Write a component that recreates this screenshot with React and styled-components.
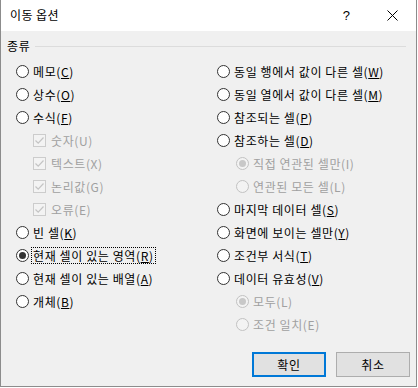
import React from 'react';
import styled, { createGlobalStyle } from 'styled-components';

const GlobalStyle = createGlobalStyle`
  html, body { margin: 0; padding: 0; background: #ffffff; }
  body {
    font-family: "Noto Sans CJK KR", "Noto Sans", sans-serif;
    font-size: 12px;
    color: #000;
  }
`;

const leftItems = [
    { label: "메모", key: "C" },
    { label: "상수", key: "O" },
    { label: "수식", key: "F" },
    { kind: "check", label: "숫자", key: "U", disabled: true, checked: true },
    { kind: "check", label: "텍스트", key: "X", disabled: true, checked: true },
    { kind: "check", label: "논리값", key: "G", disabled: true, checked: true },
    { kind: "check", label: "오류", key: "E", disabled: true, checked: true },
    { label: "빈 셀", key: "K" },
    { label: "현재 셀이 있는 영역", key: "R", checked: true, focus: true },
    { label: "현재 셀이 있는 배열", key: "A" },
    { label: "개체", key: "B" }
];

const rightItems = [
    { label: "동일 행에서 값이 다른 셀", key: "W" },
    { label: "동일 열에서 값이 다른 셀", key: "M" },
    { label: "참조되는 셀", key: "P" },
    { label: "참조하는 셀", key: "D" },
    { label: "직접 연관된 셀만", key: "I", sub: true, disabled: true, checked: true },
    { label: "연관된 모든 셀", key: "L", sub: true, disabled: true },
    { label: "마지막 데이터 셀", key: "S" },
    { label: "화면에 보이는 셀만", key: "Y" },
    { label: "조건부 서식", key: "T" },
    { label: "데이터 유효성", key: "V" },
    { label: "모두", key: "L", sub: true, disabled: true, checked: true },
    { label: "조건 일치", key: "E", sub: true, disabled: true }
];

const RadioMark = ({checked, disabled}) => (
    <RadioCircle disabled={disabled}>
        {checked && <RadioDot disabled={disabled} />}
    </RadioCircle>
);

const CheckMark = ({checked}) => (
    <CheckBox>
        {checked && (
            <svg width="11" height="11" viewBox="0 0 11 11">
                <path d="M1.5 5.5 L4.2 8.2 L9.5 2.5" fill="none" stroke="#c4c4c4" strokeWidth="1.2" />
            </svg>
        )}
    </CheckBox>
);

const Option = ({item, indent}) => (
    <OptionRow indent={indent}>
        {item.kind === "check"
            ? <CheckMark checked={item.checked} />
            : <RadioMark checked={item.checked} disabled={item.disabled} />}
        <OptionLabel disabled={item.disabled} focus={item.focus}>
            {item.label}(<AccessKey disabled={item.disabled}>{item.key}</AccessKey>)
        </OptionLabel>
    </OptionRow>
);

const App = () => (
    <>
        <GlobalStyle />
        <Window>
            <TitleBar>
                <Title>이동 옵션</Title>
                <TitleButtons>
                    <HelpMark>?</HelpMark>
                    <CloseMark>
                        <svg width="11" height="11" viewBox="0 0 11 11">
                            <path d="M0.5 0.5 L10.5 10.5 M10.5 0.5 L0.5 10.5" stroke="#000" strokeWidth="1" />
                        </svg>
                    </CloseMark>
                </TitleButtons>
            </TitleBar>
            <Body>
                <GroupHeader>
                    <GroupLabel>종류</GroupLabel>
                    <GroupLine />
                </GroupHeader>
                <Columns>
                    <Column>
                        {leftItems.map((it, i) => (
                            <Option key={i} item={it} indent={it.kind === "check" ? 17 : 0} />
                        ))}
                    </Column>
                    <Column>
                        {rightItems.map((it, i) => (
                            <Option key={i} item={it} indent={it.sub ? 19 : 0} />
                        ))}
                    </Column>
                </Columns>
                <ButtonBar>
                    <DialogButton primary>확인</DialogButton>
                    <DialogButton>취소</DialogButton>
                </ButtonBar>
            </Body>
        </Window>
    </>
);

export default App;

const Window = styled.div`
  width: 417px;
  height: 387px;
  box-sizing: border-box;
  border: 1px solid #8c8c8c;
  border-top: none;
  display: flex;
  flex-direction: column;
  background: #f0f0f0;
`;

const TitleBar = styled.div`
  height: 31px;
  flex: 0 0 31px;
  background: #ffffff;
  display: flex;
  align-items: center;
  justify-content: space-between;
  padding-left: 9px;
`;

const Title = styled.div`
  font-size: 12px;
  line-height: 16px;
  letter-spacing: 0.4px;
  padding-bottom: 1px;
`;

const TitleButtons = styled.div`
  display: flex;
  align-items: center;
  height: 100%;
`;

const HelpMark = styled.div`
  width: 46px;
  font-family: "Liberation Sans", sans-serif;
  font-size: 13px;
  text-align: right;
  padding-right: 22px;
  box-sizing: border-box;
  margin-right: 15px;
`;

const CloseMark = styled.div`
  width: 29px;
  display: flex;
  align-items: center;
  padding-bottom: 1px;
`;

const Body = styled.div`
  flex: 1;
  padding: 6px 6px 0 6px;
  display: flex;
  flex-direction: column;
`;

const GroupHeader = styled.div`
  display: flex;
  align-items: center;
  height: 18px;
`;

const GroupLabel = styled.div`
  line-height: 18px;
  letter-spacing: 0.6px;
  margin-right: 5px;
`;

const GroupLine = styled.div`
  flex: 1;
  height: 1px;
  background: #dcdcdc;
  margin-right: 4px;
`;

const Columns = styled.div`
  display: grid;
  grid-template-columns: 201px 1fr;
  padding-left: 9px;
  margin-top: 5px;
`;

const Column = styled.div`
  display: flex;
  flex-direction: column;
`;

const OptionRow = styled.div`
  height: 23px;
  display: flex;
  align-items: center;
  padding-left: ${({indent}) => indent}px;
  white-space: nowrap;
`;

const RadioCircle = styled.span`
  width: 13px;
  height: 13px;
  box-sizing: border-box;
  border-radius: 50%;
  border: 1px solid ${({disabled}) => disabled ? "#c2c2c2" : "#333333"};
  background: ${({disabled}) => disabled ? "#f3f3f3" : "#ffffff"};
  display: flex;
  align-items: center;
  justify-content: center;
  flex: 0 0 13px;
  margin-right: 2px;
`;

const RadioDot = styled.span`
  width: 7px;
  height: 7px;
  border-radius: 50%;
  background: ${({disabled}) => disabled ? "#c8c8c8" : "#333333"};
`;

const CheckBox = styled.span`
  width: 13px;
  height: 13px;
  box-sizing: border-box;
  border: 1px solid #cccccc;
  background: #f3f3f3;
  display: flex;
  align-items: center;
  justify-content: center;
  flex: 0 0 13px;
  margin-right: 3px;
`;

const OptionLabel = styled.span`
  line-height: 15px;
  padding: 0 1px;
  letter-spacing: 0.6px;
  border: 1px dotted ${({focus}) => focus ? "#000" : "transparent"};
  color: ${({disabled}) => disabled ? "#a0a0a0" : "#000"};
`;

const AccessKey = styled.span`
  text-decoration: ${({disabled}) => disabled ? "none" : "underline"};
`;

const ButtonBar = styled.div`
  display: flex;
  justify-content: flex-end;
  gap: 10px;
  margin-top: auto;
  padding: 0 0 9px 0;
`;

const DialogButton = styled.div`
  width: 74px;
  height: 25px;
  box-sizing: border-box;
  border: ${({primary}) => primary ? "2px solid #0078d7" : "1px solid #adadad"};
  background: #e1e1e1;
  display: flex;
  align-items: center;
  justify-content: center;
  font-size: 12px;
  letter-spacing: 0.6px;
`;
